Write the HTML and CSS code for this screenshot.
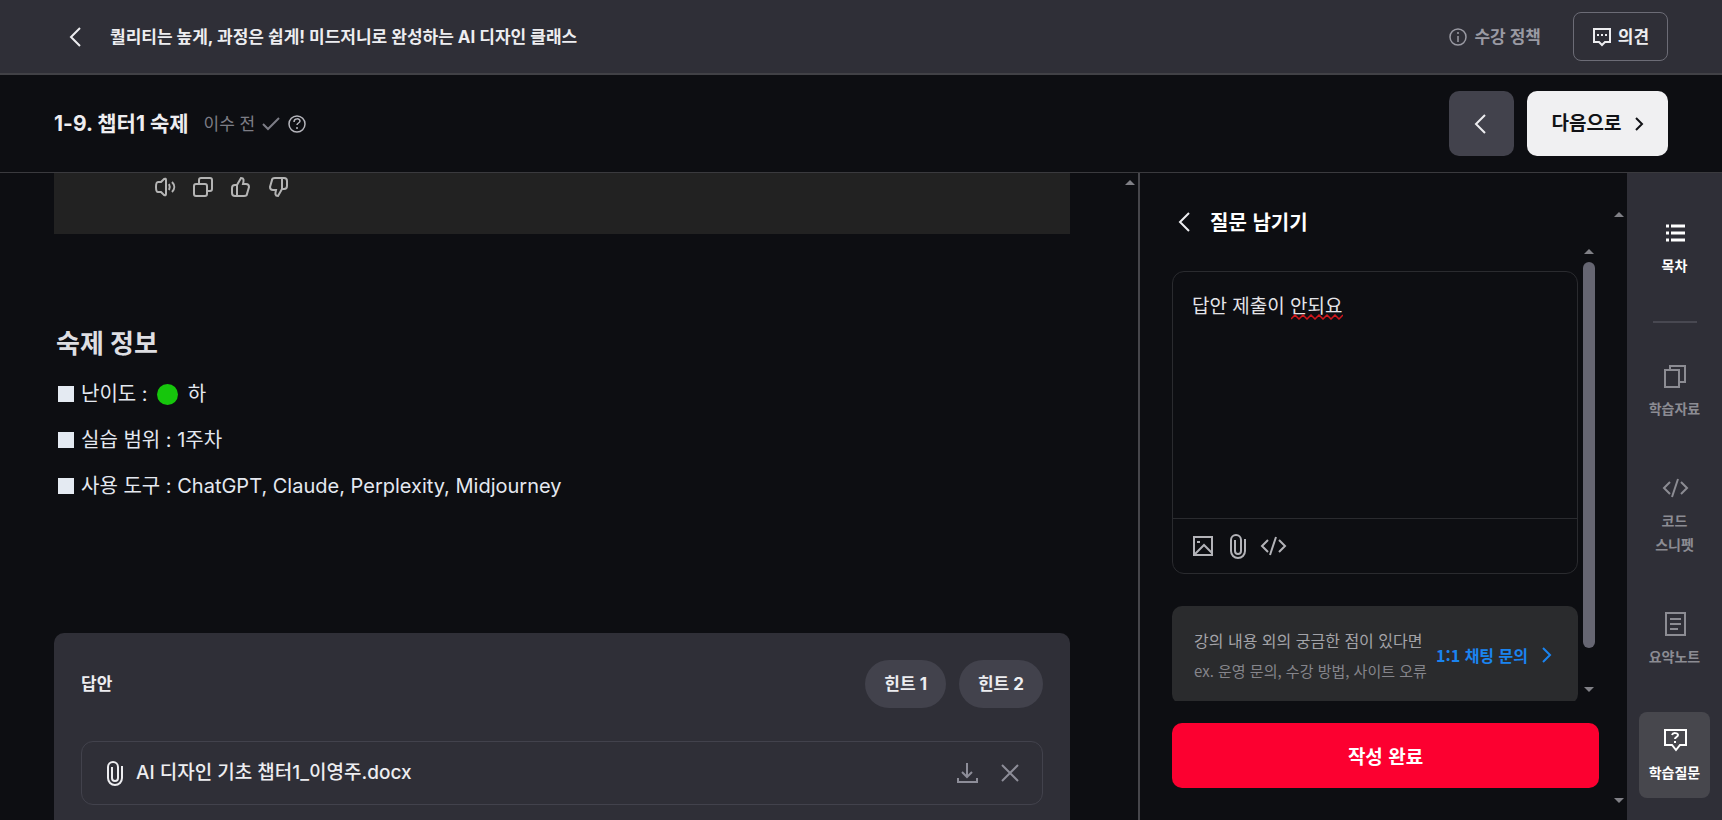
FILE: index.html
```html
<!DOCTYPE html>
<html lang="ko">
<head>
  <meta charset="UTF-8">
  <title>1-9. 챕터1 숙제</title>
  <meta name="viewport" content="width=device-width, initial-scale=1.0">
  <link rel="stylesheet" href="styles.css">
</head>
<body>

<header class="topbar">
  <button class="icon-btn" aria-label="뒤로"><svg width="24" height="24" viewBox="0 0 24 24"><path d="M18 3 9 12l9 9"/></svg></button>
  <h1 class="course-title">퀄리티는 높게, 과정은 쉽게! 미드저니로 완성하는 AI 디자인 클래스</h1>
  <a class="policy" href="#"><svg width="20" height="20" viewBox="0 0 20 20"><circle cx="10" cy="10" r="8"/><path d="M10 9v6M10 5v2"/></svg>수강 정책</a>
  <button class="feedback"><svg width="20" height="20" viewBox="0 0 20 20"><path d="M2 2h16v13h-5l-3 3-3-3H2z"/><path d="M5 8h2M9 8h2M13 8h2"/></svg>의견</button>
</header>

<div class="lesson-bar">
  <h2 class="lesson-title">1-9. 챕터1 숙제</h2>
  <div class="lesson-state">이수 전
    <svg width="20" height="20" viewBox="0 0 20 20"><path d="m2 10 5 5L18 4"/></svg>
    <svg class="help" width="20" height="20" viewBox="0 0 20 20"><circle cx="10" cy="10" r="8"/><path d="M7 8c0-4 6-4 6-1 0 2-3 2-3 4M10 13v2"/></svg>
  </div>
  <button class="prev" aria-label="이전으로"><svg width="24" height="24" viewBox="0 0 24 24"><path d="m15 3-9 9 9 9"/></svg></button>
  <button class="next">다음으로<svg width="16" height="16" viewBox="0 0 16 16"><path d="m5 2 6 6-6 6"/></svg></button>
</div>

<main class="main">
  <section class="content">
    <div class="content-body">
      <div class="chat">
        <svg width="22" height="22" viewBox="0 0 22 22"><path d="M7 6l3-3q2-1 2 1v14q0 2-2 1l-3-3H4q-2 0-2-5t2-5zM15 8c1 2 1 4 0 6M18 6c3 3 3 7 0 10"/></svg>
        <svg width="22" height="22" viewBox="0 0 22 22"><rect x="2" y="8" width="13" height="12" rx="2"/><path d="M7 8V4c0-1 1-2 2-2h9c1 0 2 1 2 2v9c0 1-1 2-2 2h-3"/></svg>
        <svg width="22" height="22" viewBox="0 0 22 22"><path d="M7 9 11 2c3 0 3 2 2 6h3c2 0 3 1 3 3l-2 7c0 1-1 2-3 2H5c-2 0-3-1-3-3v-5c0-2 1-3 3-3h2v11"/></svg>
        <svg width="22" height="22" viewBox="0 0 22 22"><path d="m14 13-4 7c-3 0-3-2-2-6H5c-2 0-3-1-3-3l2-7c0-1 1-2 3-2h9c2 0 3 1 3 3v5c0 2-1 3-3 3h-2V2"/></svg>
      </div>
      <div class="info">
        <h3>숙제 정보</h3>
        <ul>
          <li>난이도 : <span class="level"></span> 하</li>
          <li>실습 범위 : 1주차</li>
          <li>사용 도구 : ChatGPT, Claude, Perplexity, Midjourney</li>
        </ul>
      </div>
      <div class="answer">
        <div class="answer-head">
          <h4>답안</h4>
          <button>힌트 1</button>
          <button>힌트 2</button>
        </div>
        <div class="file">
          <svg class="clip" width="24" height="26" viewBox="0 0 24 26"><path d="M20 6v12a7 7 0 0 1-14 0V7a5 5 0 0 1 10 0v11a3 3 0 0 1-6 0V7"/></svg>
          <span class="file-name">AI 디자인 기초 챕터1_이영주.docx</span>
          <button class="icon-btn" aria-label="다운로드"><svg width="24" height="24" viewBox="0 0 24 24"><path d="M11 2v14m-5-5 5 5 5-5M2 17v4h19v-4"/></svg></button>
          <button class="icon-btn" aria-label="삭제"><svg width="20" height="20" viewBox="0 0 20 20"><path d="m2 2 16 16M18 2 2 18"/></svg></button>
        </div>
      </div>
    </div>
    <div class="scroll scroll-content"><i class="up"></i></div>
  </section>

  <section class="question">
    <div class="question-body">
      <div class="question-head">
        <button class="icon-btn" aria-label="뒤로"><svg width="24" height="24" viewBox="0 0 24 24"><path d="m17 3-9 9 9 9"/></svg></button>
        <h3>질문 남기기</h3>
      </div>
      <div class="question-scroll">
        <div class="question-form">
          <div class="editor">
            <textarea aria-label="질문 내용" spellcheck="false">답안 제출이 안되요</textarea>
            <svg class="typo" width="52" height="6" viewBox="0 0 52 6"><path d="m0 5 4-4 4 4 4-4 4 4 4-4 4 4 4-4 4 4 4-4 4 4 4-4 4 4 4-4"/></svg>
            <div class="tools">
              <button class="icon-btn" aria-label="이미지"><svg width="24" height="24" viewBox="0 0 24 24"><path d="M3 3h18v18H3zM3 21l10-10 8 8"/><path d="M6 8h3"/></svg></button>
              <button class="icon-btn" aria-label="파일"><svg width="24" height="26" viewBox="0 0 24 26"><path d="M20 6v12a7 7 0 0 1-14 0V7a5 5 0 0 1 10 0v11a3 3 0 0 1-6 0V7"/></svg></button>
              <button class="icon-btn" aria-label="코드"><svg width="28" height="24" viewBox="0 0 28 24"><path d="M9 6 3 12l6 6M20 6l6 6-6 6M17 3l-6 18"/></svg></button>
            </div>
          </div>
          <div class="contact">
            <p>강의 내용 외의 궁금한 점이 있다면<br><small>ex. 운영 문의, 수강 방법, 사이트 오류</small></p>
            <a href="#">1:1 채팅 문의<svg width="16" height="16" viewBox="0 0 16 16"><path d="m5 1 7 7-7 7"/></svg></a>
          </div>
        </div>
        <div class="scroll"><i class="up"></i><b></b><i class="down"></i></div>
      </div>
      <button class="submit">작성 완료</button>
    </div>
    <div class="scroll scroll-question"><i class="up"></i><i class="down"></i></div>
  </section>

  <nav class="side">
    <a class="on" href="#"><svg width="24" height="24" viewBox="0 0 24 24"><path stroke-width="3" d="M3 5h3M8 5h14M3 12h3M8 12h14M3 19h3M8 19h14"/></svg>목차</a>
    <hr>
    <a href="#"><svg width="24" height="24" viewBox="0 0 24 24"><path d="M2 6h14v17H2zM7 6V2h15v16h-6"/></svg>학습자료</a>
    <a href="#"><svg width="28" height="24" viewBox="0 0 28 24"><path d="M9 6 3 12l6 6M20 6l6 6-6 6M17 3l-6 18"/></svg>코드<br>스니펫</a>
    <a href="#"><svg width="24" height="24" viewBox="0 0 24 24"><path d="M3 1h19v22H3zM7 7h11M7 12h11M7 17h8"/></svg>요약노트</a>
    <a class="on active" href="#"><svg width="24" height="24" viewBox="0 0 24 24"><path d="M2 2h21v15h-6l-4 5-4-5H2z"/><path d="M9 7c1-3 6-2 6 0s-3 2-3 4M12 13v2"/></svg>학습질문</a>
  </nav>
</main>

</body>
</html>
```
FILE: styles.css
```css
* {
  box-sizing: border-box;
}

body {
  margin: 0;
  height: 100vh;
  overflow: hidden;
  display: flex;
  flex-direction: column;
  background: #0d0e12;
  color: #ededf0;
  font-family: Inter, "Noto Sans CJK KR", sans-serif;
  font-size: 17px;
  line-height: 24px;
}

h1, h2, h3, h4, p, ul {
  margin: 0;
  padding: 0;
}

button {
  border: none;
  padding: 0;
  font: inherit;
  color: inherit;
  background: none;
  cursor: pointer;
}

a {
  color: inherit;
  text-decoration: none;
}

svg {
  flex: none;
  fill: none;
  stroke: currentColor;
  stroke-width: 2;
}

.icon-btn {
  display: flex;
}

/* header */
.topbar {
  flex: none;
  height: 75px;
  display: flex;
  align-items: center;
  padding: 0 54px 0 62px;
  background: #2f2f37;
  border-bottom: 2px solid #414146;
}

.course-title {
  flex: 1;
  margin-left: 24px;
  font-family: Inter, "Noto Sans CJK KR", sans-serif;
  font-size: 17px;
  font-weight: 700;
}

.policy {
  display: flex;
  align-items: center;
  gap: 6px;
  margin-right: 32px;
  color: #9a9aa3;
  font-weight: 700;
}

.policy svg {
  stroke-width: 1.5;
}

.feedback {
  display: flex;
  align-items: center;
  justify-content: center;
  gap: 6px;
  width: 95px;
  height: 49px;
  border: 1px solid #6c6c76;
  border-radius: 8px;
  font-weight: 700;
}

.lesson-bar {
  flex: none;
  height: 98px;
  display: flex;
  align-items: center;
  padding: 0 54px;
  border-bottom: 1px solid #3a3a3e;
}

.lesson-title {
  font-size: 21px;
}

.lesson-state {
  flex: 1;
  display: flex;
  align-items: center;
  gap: 6px;
  margin-left: 15px;
  color: #7d7d86;
}

.lesson-state .help {
  color: #b5b5bc;
  stroke-width: 1.5;
}

.prev, .next {
  display: flex;
  align-items: center;
  justify-content: center;
  height: 65px;
  border-radius: 10px;
}

.prev {
  width: 65px;
  margin-right: 13px;
  background: #42424c;
}

.next {
  width: 141px;
  padding-left: 4px;
  gap: 10px;
  background: #f0f0f2;
  color: #111216;
  font-size: 19px;
  font-weight: 700;
}

/* columns */
.main {
  flex: 1;
  min-height: 0;
  display: flex;
}

.content {
  flex: 1;
  display: flex;
  overflow: hidden;
}

.content-body {
  flex: 1;
  padding-left: 54px;
}

.chat {
  display: flex;
  gap: 16px;
  height: 61px;
  padding: 3px 100px;
  background: #222;
  color: #b4b4b4;
}

.info {
  padding: 90px 2px 0;
  height: 399px;
}

.info h3 {
  margin-bottom: 7px;
  font-size: 26px;
  line-height: 40px;
  font-weight: 700;
  color: #dedee2;
}

.info ul {
  list-style: none;
}

.info li {
  display: flex;
  align-items: center;
  font-size: 20px;
  line-height: 46px;
  color: #e4e8f0;
  white-space: pre;
}

.info li::before {
  content: "";
  width: 16px;
  height: 16px;
  margin: 0 7px 0 2px;
  background: #e4eaf2;
}

.level {
  width: 21px;
  height: 21px;
  margin: 0 4px;
  border-radius: 50%;
  background: #16c60c;
}

.answer {
  height: 220px;
  padding: 27px;
  border-radius: 10px 10px 0 0;
  background: #2f2f37;
}

.answer-head {
  display: flex;
  align-items: center;
  gap: 13px;
  margin-bottom: 33px;
}

.answer-head h4 {
  flex: 1;
  font-weight: 700;
}

.answer-head button {
  height: 48px;
  padding: 0 19px;
  border-radius: 24px;
  background: #42424c;
  font-weight: 700;
}

.file {
  display: flex;
  align-items: center;
  height: 64px;
  padding: 0 22px 0 20px;
  border: 1px solid #42424c;
  border-radius: 12px;
}

.file-name {
  flex: 1;
  margin-left: 10px;
  font-size: 19px;
  font-weight: 500;
}

.file .icon-btn {
  margin-left: 20px;
  color: #8d8d98;
}

/* scroll tracks */
.scroll {
  flex: none;
  display: flex;
  flex-direction: column;
  align-items: center;
  width: 16px;
}

.scroll i {
  border: 5px solid transparent;
}

.scroll .up {
  border-top: none;
  border-bottom-color: #808086;
}

.scroll .down {
  border-bottom: none;
  border-top-color: #808086;
  margin-top: auto;
}

.scroll b {
  width: 12px;
  height: 386px;
  margin-top: 8px;
  border-radius: 6px;
  background: #666672;
}

.scroll-content {
  margin-left: 52px;
  padding-top: 7px;
}

/* question panel */
.question {
  flex: none;
  width: 489px;
  display: flex;
  border-left: 2px solid #46464b;
  font-family: "Noto Sans CJK KR", sans-serif;
}

.question-body {
  flex: 1;
  display: flex;
  flex-direction: column;
  padding: 29px 12px 32px 32px;
}

.question-head {
  display: flex;
  align-items: center;
  height: 40px;
  gap: 14px;
  margin-bottom: 7px;
}

.question-head h3 {
  font-size: 20px;
  color: #fff;
}

.question-scroll {
  flex: 1;
  min-height: 0;
  display: flex;
  gap: 3px;
  margin: 0 14px 22px 0;
}

.question-scroll .scroll {
  padding-bottom: 9px;
}

.question-form {
  flex: 1;
  padding-top: 22px;
  overflow: hidden;
}

.editor {
  position: relative;
  margin-bottom: 32px;
  border: 1px solid #2a2b2f;
  border-radius: 12px;
}

.editor textarea {
  display: block;
  width: 100%;
  height: 246px;
  padding: 19px;
  border: none;
  outline: none;
  resize: none;
  background: none;
  color: #e4e4e8;
  font-family: inherit;
  font-size: 19px;
  line-height: 28px;
}

.typo {
  position: absolute;
  left: 118px;
  top: 42px;
  color: #d0161b;
  stroke-width: 1.5;
}

.tools {
  display: flex;
  align-items: center;
  gap: 10px;
  height: 55px;
  padding: 0 18px;
  border-top: 1px solid #2a2b2f;
  color: #b3b3b8;
}

.contact {
  display: flex;
  align-items: center;
  justify-content: space-between;
  height: 98px;
  padding: 0 24px 0 22px;
  border-radius: 10px;
  background: #2a2b2d;
  color: #a3a3a8;
  font-size: 16px;
  white-space: nowrap;
}

.contact p {
  line-height: 30px;
}

.contact small {
  font-size: 15px;
  color: #85858b;
}

.contact a {
  display: flex;
  align-items: center;
  gap: 10px;
  color: #1a84f0;
  font-weight: 700;
}

.submit {
  height: 65px;
  margin-right: 12px;
  border-radius: 10px;
  background: #fc0030;
  color: #fff;
  font-size: 19px;
  font-weight: 700;
}

.scroll-question {
  margin-left: -12px;
  padding: 39px 0 17px;
}

/* side menu */
.side {
  flex: none;
  width: 95px;
  padding: 36px 12px 0;
  background: #2f2f37;
  color: #8c8c93;
  font-family: "Noto Sans CJK KR", sans-serif;
  font-size: 14px;
  font-weight: 700;
  text-align: center;
}

.side a {
  display: block;
  padding: 12px 0;
  margin-bottom: 32px;
}

.side svg {
  display: block;
  margin: 0 auto 8px;
}

.side hr {
  width: 44px;
  margin: 0 auto 29px;
  border: none;
  border-top: 2px solid #484851;
}

.side .on {
  color: #fff;
}

.side .active {
  padding: 16px 0 14px;
  border-radius: 8px;
  background: #47474d;
}
```
